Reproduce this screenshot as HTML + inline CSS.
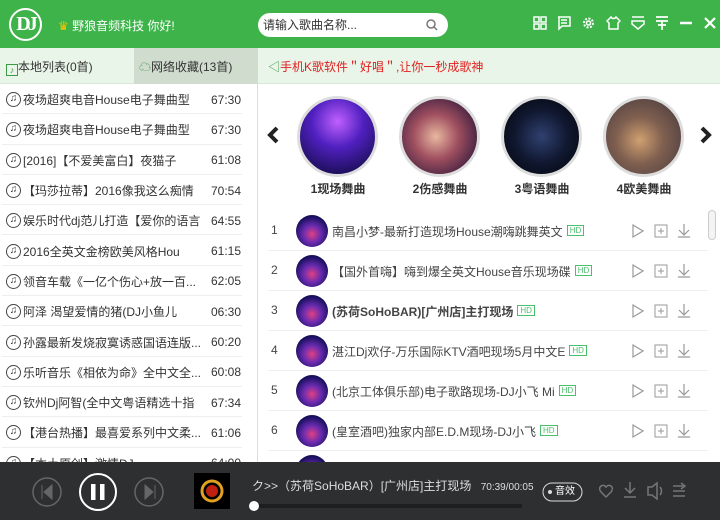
<!DOCTYPE html>
<html><head><meta charset="utf-8">
<style>
*{margin:0;padding:0;box-sizing:border-box}
body{width:720px;height:520px;overflow:hidden;font-family:"Liberation Sans","Noto Sans CJK SC",sans-serif;background:#fff;position:relative;color:#333}
.hdr{position:absolute;left:0;top:0;width:720px;height:48px;background:#3db34a}
.logo{position:absolute;left:9px;top:8px;width:33px;height:33px;border:2px solid #fff;border-radius:50%;color:#fff;font:bold 20px "Liberation Serif",serif;text-align:center;line-height:29px;letter-spacing:-3px}
.hello{position:absolute;left:58px;top:17px;color:#fff;font-size:12px}
.search{position:absolute;left:258px;top:13px;width:190px;height:24px;background:#fff;border-radius:12px;font-size:12px;color:#333;padding-left:5px;line-height:24px}
.search svg{position:absolute;right:10px;top:6px}
.icons{position:absolute;left:533px;top:15px;display:flex;gap:10px}
.icons svg{display:block}
.tabs{position:absolute;left:0;top:48px;width:720px;height:36px;background:#e9f5e8;border-bottom:1px solid #d8e8d6}
.tab{position:absolute;top:0;height:36px;line-height:38px;font-size:12px;color:#333}
.left{position:absolute;left:0;top:84px;width:258px;height:378px;border-right:1px solid #ddd;overflow:hidden}
.row{height:30.3px;border-bottom:1px solid #eee;margin:0 15px 0 2px;display:flex;align-items:center;font-size:12px;color:#333;white-space:nowrap;padding-top:2px}
.row .ic{width:15px;height:15px;border:1.3px solid #444;border-radius:50%;margin:0 2px 0 4px;font-size:10px;line-height:12px;text-align:center;flex:none}
.row .t{width:178px;overflow:hidden}
.row .d{margin-left:10px}
.cir{position:absolute;top:96px;width:81px;height:81px;border-radius:50%;border:3px solid #ddd}
.cl{position:absolute;top:180px;font-size:12px;color:#333;font-weight:bold;width:100px;text-align:center}
.lr{position:absolute;left:268px;width:440px;height:40px;border-bottom:1px solid #eee}
.lr .n{position:absolute;left:3px;top:12px;font-size:12px;color:#444}
.lr .av{position:absolute;left:28px;top:4px;width:32px;height:32px;border-radius:50%;background:radial-gradient(circle at 50% 60%,#e04080 0,#6a2bb0 35%,#1a1060 70%,#0a0830 100%)}
.lr .s{position:absolute;left:64px;top:12px;font-size:12px;color:#444;white-space:nowrap}
.hd{display:inline-block;border:1px solid #4bbf6b;color:#4bbf6b;font-size:8px;line-height:9px;padding:0 2px;vertical-align:3px;margin-left:4px}
.lr .ops{position:absolute;left:362px;top:12px}
.player{position:absolute;left:0;top:462px;width:720px;height:58px;background:#2d2f31}
</style></head><body>
<div class="hdr">
 <div class="logo">DJ</div>
 <div class="hello"><span style="color:#f5c400">♛</span> 野狼音频科技 你好!</div>
 <div class="search">请输入歌曲名称...<svg width="12" height="12"><circle cx="5" cy="5" r="4" fill="none" stroke="#777" stroke-width="1.5"/><path d="M8 8l3 3" stroke="#777" stroke-width="1.5"/></svg></div>
 <div class="icons">
  <svg width="14" height="16"><g fill="none" stroke="#fff" stroke-width="1.5"><rect x="1" y="2" width="5" height="5"/><rect x="8" y="2" width="5" height="5"/><rect x="1" y="9" width="5" height="5"/><rect x="8" y="9" width="5" height="5"/></g></svg>
  <svg width="14" height="16"><g fill="none" stroke="#fff" stroke-width="1.5"><path d="M1 2h12v9H5l-3 3V2"/><path d="M4 5h6M4 8h6"/></g></svg>
  <svg width="15" height="16"><g fill="none" stroke="#fff" stroke-width="2"><circle cx="7.5" cy="8" r="4.5" stroke-dasharray="2 1.5"/><circle cx="7.5" cy="8" r="2" stroke-width="1.5"/></g></svg>
  <svg width="15" height="16"><path d="M5 2L1 6l2 2v6h9V8l2-2-4-4c-1 2-4 2-5 0z" fill="none" stroke="#fff" stroke-width="1.5"/></svg>
  <svg width="14" height="16"><g fill="none" stroke="#fff" stroke-width="1.5"><path d="M1 2h12M1 6h12v3l-6 5-6-5z"/></g></svg>
  <svg width="14" height="16"><g fill="none" stroke="#fff" stroke-width="1.7"><path d="M1 2h12M1 6h12M7 6v9M3 10h8"/></g></svg>
  <svg width="14" height="16"><path d="M1 8h12" stroke="#fff" stroke-width="2.5"/></svg>
  <svg width="14" height="16"><path d="M2 3l10 10M12 3L2 13" stroke="#fff" stroke-width="2.2"/></svg>
 </div>
</div>
<div class="tabs">
 <div class="tab" style="left:0;width:134px;padding-left:6px"><span style="display:inline-block;width:12px;height:12px;border:1px solid #3a9a46;vertical-align:-2px;color:#3a9a46;font-size:9px;line-height:10px;text-align:center">♪</span>本地列表(0首)</div>
 <div class="tab" style="left:134px;width:124px;background:#cfdcce;padding-left:5px"><span style="color:#3a9a46">☁</span>网络收藏(13首)</div>
 <div class="tab" style="left:268px;color:#e02020"><span style="color:#3a9a46">◁</span>手机K歌软件＂好唱＂,让你一秒成歌神</div>
</div>
<div class="left">
 <div class="row"><span class="ic">♫</span><span class="t">夜场超爽电音House电子舞曲型</span><span class="d">67:30</span></div>
 <div class="row"><span class="ic">♫</span><span class="t">夜场超爽电音House电子舞曲型</span><span class="d">67:30</span></div>
 <div class="row"><span class="ic">♫</span><span class="t">[2016]【不爱美富白】夜猫子</span><span class="d">61:08</span></div>
 <div class="row"><span class="ic">♫</span><span class="t">【玛莎拉蒂】2016像我这么痴情</span><span class="d">70:54</span></div>
 <div class="row"><span class="ic">♫</span><span class="t">娱乐时代dj范儿打造【爱你的语言</span><span class="d">64:55</span></div>
 <div class="row"><span class="ic">♫</span><span class="t">2016全英文金榜欧美风格Hou</span><span class="d">61:15</span></div>
 <div class="row"><span class="ic">♫</span><span class="t">领音车载《一亿个伤心+放一百...</span><span class="d">62:05</span></div>
 <div class="row"><span class="ic">♫</span><span class="t">阿泽 渴望爱情的猪(DJ小鱼儿</span><span class="d">06:30</span></div>
 <div class="row"><span class="ic">♫</span><span class="t">孙露最新发烧寂寞诱惑国语连版...</span><span class="d">60:20</span></div>
 <div class="row"><span class="ic">♫</span><span class="t">乐听音乐《相依为命》全中文全...</span><span class="d">60:08</span></div>
 <div class="row"><span class="ic">♫</span><span class="t">钦州Dj阿智(全中文粤语精选十指</span><span class="d">67:34</span></div>
 <div class="row"><span class="ic">♫</span><span class="t">【港台热播】最喜爱系列中文柔...</span><span class="d">61:06</span></div>
 <div class="row"><span class="ic">♫</span><span class="t">【本土原创】激情DJ...</span><span class="d">64:00</span></div>
</div>
<svg style="position:absolute;left:266px;top:126px" width="14" height="18"><path d="M11 2L4 9l7 7" fill="none" stroke="#222" stroke-width="4"/></svg>
<svg style="position:absolute;left:699px;top:126px" width="14" height="18"><path d="M3 2l7 7-7 7" fill="none" stroke="#222" stroke-width="4"/></svg>
<div class="cir" style="left:297px;background:radial-gradient(circle at 50% 30%,#c060ff 0,#5020c0 40%,#201060 80%)"></div>
<div class="cir" style="left:399px;background:radial-gradient(circle at 45% 50%,#e8b8a0 0,#a05060 40%,#402040 80%)"></div>
<div class="cir" style="left:501px;background:radial-gradient(circle at 50% 50%,#304070 0,#101830 50%,#050810 90%)"></div>
<div class="cir" style="left:603px;background:radial-gradient(circle at 45% 55%,#d0a070 0,#806050 40%,#504040 85%)"></div>
<div class="cl" style="left:288px">1现场舞曲</div>
<div class="cl" style="left:390px">2伤感舞曲</div>
<div class="cl" style="left:492px">3粤语舞曲</div>
<div class="cl" style="left:594px">4欧美舞曲</div>
<div style="position:absolute;left:708px;top:210px;width:8px;height:30px;border:1px solid #ccc;border-radius:4px;background:#f4f4f4"></div>
<div id="list"></div>
<script>
var s=["南昌小梦-最新打造现场House潮嗨跳舞英文","【国外首嗨】嗨到爆全英文House音乐现场碟","<b>(苏荷SoHoBAR)[广州店]主打现场</b>","湛江Dj欢仔-万乐国际KTV酒吧现场5月中文E","(北京工体俱乐部)电子歌路现场-DJ小飞 Mi","(皇室酒吧)独家内部E.D.M现场-DJ小飞",""];
var h="",ops='<svg width="70" height="16"><path d="M3 2l10 6-10 6z" fill="none" stroke="#999" stroke-width="1.2"/><rect x="25" y="2" width="12" height="12" fill="none" stroke="#999"/><path d="M31 5v6M28 8h6" stroke="#999"/><path d="M54 1v10M49 7l5 5 5-5M48 14h12" fill="none" stroke="#999" stroke-width="1.2"/></svg>';
for(var i=0;i<7;i++){h+='<div class="lr" style="top:'+(211+i*40)+'px"><span class="n">'+(i<6?i+1:'')+'</span><div class="av"></div>'+(i<6?'<span class="s">'+s[i]+'<span class="hd">HD</span></span><span class="ops">'+ops+'</span>':'')+'</div>';}
document.getElementById('list').innerHTML=h;
</script>
<div class="player">
 <svg style="position:absolute;left:0;top:0" width="720" height="58">
  <circle cx="47" cy="30" r="14" fill="none" stroke="#666" stroke-width="1.5"/><path d="M42 23v14M52 23l-8 7 8 7z" fill="#666" stroke="#666"/>
  <circle cx="98" cy="30" r="18" fill="none" stroke="#fff" stroke-width="2"/><rect x="91" y="22" width="4.5" height="16" fill="#fff"/><rect x="100" y="22" width="4.5" height="16" fill="#fff"/>
  <circle cx="149" cy="30" r="14" fill="none" stroke="#666" stroke-width="1.5"/><path d="M155 23v14M145 23l8 7-8 7z" fill="#666" stroke="#666"/>
  <rect x="194" y="11" width="36" height="36" fill="#000"/><circle cx="212" cy="29" r="10" fill="none" stroke="#e0a020" stroke-width="3"/><circle cx="212" cy="29" r="6" fill="#c02010"/>
  <rect x="254" y="42" width="268" height="4" fill="#1d1e20"/><circle cx="254" cy="44" r="5" fill="#fff"/>
  <rect x="543" y="21" width="39" height="18" rx="9" fill="none" stroke="#ddd"/><circle cx="550" cy="30" r="2" fill="#ddd"/>
  <path d="M606 25c-3-4-9 0-5 5l5 5 5-5c4-5-2-9-5-5z" fill="none" stroke="#777" stroke-width="1.5"/>
  <path d="M630 20v11M625 26l5 5 5-5M624 35h12" fill="none" stroke="#777" stroke-width="1.5"/>
  <path d="M648 25h4l5-4v16l-5-4h-4zM660 25c2 2 2 6 0 8" fill="none" stroke="#777" stroke-width="1.5"/>
  <path d="M673 24h10M673 29h12M673 34h12M681 21l4 3-4 3" fill="none" stroke="#777" stroke-width="1.5"/>
 </svg>
 <div style="position:absolute;left:252px;top:15px;font-size:12px;color:#ddd;white-space:nowrap">ク&gt;&gt;（苏荷SoHoBAR）[广州店]主打现场 <span style="font-size:10px;margin-left:6px">70:39/00:05</span></div>
 <div style="position:absolute;left:555px;top:23px;font-size:10px;line-height:14px;color:#fff">音效</div>
</div>
</body></html>
